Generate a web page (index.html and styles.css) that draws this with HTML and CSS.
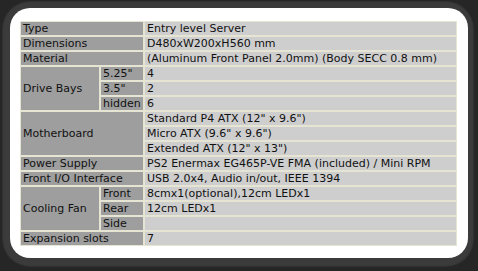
FILE: index.html
```html
<!DOCTYPE html>
<html lang="en">
<head>
    <meta charset="UTF-8">
    <meta name="viewport" content="width=device-width, initial-scale=1.0">
    <title>Specification</title>
    <link rel="stylesheet" href="styles.css">
</head>
<body>
    <div class="frame">
        <div class="panel">
            <table class="spec">
                <colgroup>
                    <col class="col-group">
                    <col class="col-sub">
                    <col>
                </colgroup>
                <tr>
                    <td class="label" colspan="2">Type</td>
                    <td class="value">Entry level Server</td>
                </tr>
                <tr>
                    <td class="label" colspan="2">Dimensions</td>
                    <td class="value">D480xW200xH560 mm</td>
                </tr>
                <tr>
                    <td class="label" colspan="2">Material</td>
                    <td class="value">(Aluminum Front Panel 2.0mm) (Body SECC 0.8 mm)</td>
                </tr>
                <tr>
                    <td class="label" rowspan="3">Drive Bays</td>
                    <td class="label">5.25"</td>
                    <td class="value">4</td>
                </tr>
                <tr>
                    <td class="label">3.5"</td>
                    <td class="value">2</td>
                </tr>
                <tr>
                    <td class="label">hidden</td>
                    <td class="value">6</td>
                </tr>
                <tr>
                    <td class="label" colspan="2" rowspan="3">Motherboard</td>
                    <td class="value">Standard P4 ATX (12" x 9.6")</td>
                </tr>
                <tr>
                    <td class="value">Micro ATX (9.6" x 9.6")</td>
                </tr>
                <tr>
                    <td class="value">Extended ATX (12" x 13")</td>
                </tr>
                <tr>
                    <td class="label" colspan="2">Power Supply</td>
                    <td class="value">PS2 Enermax EG465P-VE FMA (included) / Mini RPM</td>
                </tr>
                <tr>
                    <td class="label" colspan="2">Front I/O Interface</td>
                    <td class="value">USB 2.0x4, Audio in/out, IEEE 1394</td>
                </tr>
                <tr>
                    <td class="label" rowspan="3">Cooling Fan</td>
                    <td class="label">Front</td>
                    <td class="value">8cmx1(optional),12cm LEDx1</td>
                </tr>
                <tr>
                    <td class="label">Rear</td>
                    <td class="value">12cm LEDx1</td>
                </tr>
                <tr>
                    <td class="label">Side</td>
                    <td class="value"></td>
                </tr>
                <tr>
                    <td class="label" colspan="2">Expansion slots</td>
                    <td class="value">7</td>
                </tr>
            </table>
        </div>
    </div>
</body>
</html>
```

FILE: styles.css
```css
body {
    margin: 0;
    background-color: #262626;
    font-family: "DejaVu Sans", Verdana, sans-serif;
}

.frame {
    margin: 1px 4px 5px 2px;
    padding: 7px 6px 9px 8px;
    background-color: #3b3b3b;
    border-radius: 28px;
    box-shadow: inset 0 0 2px #1e1e1e;
}

.panel {
    background-color: #fff;
    border-radius: 20px;
    padding: 13px 11px 12px 10px;
}

.spec {
    border-collapse: separate;
    border-spacing: 0;
    width: 437px;
    table-layout: fixed;
    font-size: 11px;
    color: #111;
}

.col-group {
    width: 80px;
}

.col-sub {
    width: 44px;
}

.spec td {
    height: 13px;
    line-height: 13px;
    padding: 0 0 0 2px;
    border: 1px solid #e6e4d3;
    white-space: nowrap;
    overflow: hidden;
}

.label {
    background-color: #9e9e9e;
}

.value {
    background-color: #cecece;
    padding-left: 3px;
}
```
